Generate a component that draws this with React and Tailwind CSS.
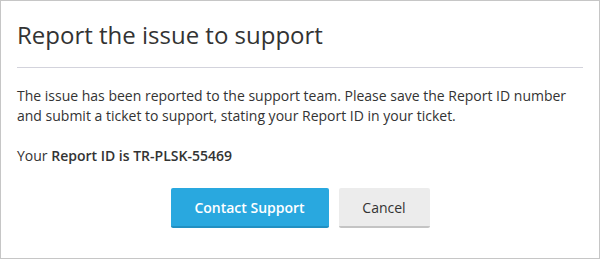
import React from 'react'

// ── Report dialog ────────────────────────────────────────────────────────────

export default function App() {
  return (
    <div
      className="w-[600px] h-[259px] bg-white border border-[#c6c6c6] text-[#333333] overflow-hidden"
      style={{ fontFamily: '"Open Sans", "Liberation Sans", sans-serif' }}
    >
      <div className="pt-[18px] px-[16px]">
        <h1 className="text-[24px] leading-[32px] font-normal text-[#333333]">
          Report the issue to support
        </h1>
        <div className="mt-[16px] h-px bg-[#d3d3dc]" />
      </div>

      <div className="px-[16px] pt-[18px] text-[14px] leading-[20px]">
        <p>
          The issue has been reported to the support team. Please save the Report ID number
          and submit a ticket to support, stating your Report ID in your ticket.
        </p>
        <p className="mt-[20px]">
          Your <span className="font-semibold">Report ID is TR-PLSK-55469</span>
        </p>
      </div>

      <div className="mt-[22px] flex justify-center gap-[10px]">
        <button className="w-[158px] h-[40px] rounded-[2px] bg-[#29a8df] border-b-2 border-[#2190c2] text-white text-[14px] font-semibold">
          Contact Support
        </button>
        <button className="w-[91px] h-[40px] rounded-[2px] bg-[#ececec] border-b-2 border-[#c4c4c4] text-[#333333] text-[14px]">
          Cancel
        </button>
      </div>
    </div>
  )
}
